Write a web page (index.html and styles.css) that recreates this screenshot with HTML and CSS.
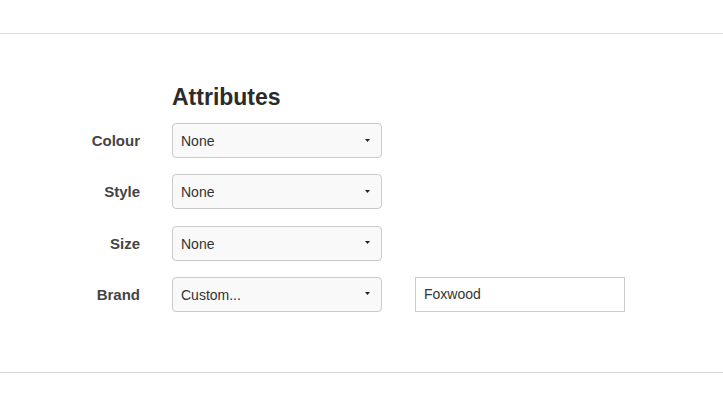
FILE: index.html
```html
<!DOCTYPE html>
<html>
<head>
<meta charset="utf-8">
<link rel="stylesheet" href="styles.css">
</head>
<body>
<div class="topbar"></div>
<main class="content">
  <h3 class="title">Attributes</h3>
  <div class="rows">
    <div class="row">
      <label class="lbl">Colour</label>
      <div class="select"><span>None</span><svg class="caret" width="5" height="3" viewBox="0 0 5 3"><polygon points="0,0 5,0 2.5,3" fill="#222"/></svg></div>
    </div>
    <div class="row">
      <label class="lbl">Style</label>
      <div class="select"><span>None</span><svg class="caret" width="5" height="3" viewBox="0 0 5 3"><polygon points="0,0 5,0 2.5,3" fill="#222"/></svg></div>
    </div>
    <div class="row">
      <label class="lbl">Size</label>
      <div class="select"><span>None</span><svg class="caret" width="5" height="3" viewBox="0 0 5 3"><polygon points="0,0 5,0 2.5,3" fill="#222"/></svg></div>
    </div>
    <div class="row">
      <label class="lbl">Brand</label>
      <div class="select"><span>Custom...</span><svg class="caret" width="5" height="3" viewBox="0 0 5 3"><polygon points="0,0 5,0 2.5,3" fill="#222"/></svg></div>
      <div class="textinput">Foxwood</div>
    </div>
  </div>
</main>
<div class="bottombar"></div>
</body>
</html>
```
FILE: styles.css
```css
html, body {
  margin: 0;
  padding: 0;
  background: #fff;
  font-family: "Liberation Sans", Arial, sans-serif;
  color: #333;
}
.topbar {
  height: 33px;
  border-bottom: 1px solid #dedede;
}
.content {
  padding-top: 50px;
  height: 288px;
  box-sizing: border-box;
}
.title {
  margin: 0 0 13px 172px;
  font-size: 23px;
  line-height: 26px;
  font-weight: bold;
  color: #2b2b2b;
}
.rows {
  display: flex;
  flex-direction: column;
  gap: 16.33px;
}
.row {
  display: flex;
  align-items: center;
  height: 35px;
}
.lbl {
  width: 140px;
  text-align: right;
  font-size: 15px;
  font-weight: bold;
  color: #444;
  margin-right: 32px;
}
.select {
  width: 210px;
  height: 35px;
  box-sizing: border-box;
  border: 1px solid #cacaca;
  border-radius: 4px;
  background: #f9f9f9;
  display: flex;
  align-items: center;
  justify-content: space-between;
  padding: 0 11px 0 8px;
  font-size: 14px;
  color: #333;
}
.select span {
  padding-top: 1px;
}
.caret {
  display: block;
  margin-top: -1px;
}
.textinput {
  margin-left: 33px;
  width: 210px;
  height: 35px;
  box-sizing: border-box;
  border: 1px solid #cccccc;
  background: #fff;
  display: flex;
  align-items: center;
  padding: 0 8px;
  font-size: 14px;
  color: #333;
}
.bottombar {
  height: 50px;
  border-bottom: 1px solid #d8d8d8;
  box-shadow: 0 1px 0 #f3f3f3;
}
```
